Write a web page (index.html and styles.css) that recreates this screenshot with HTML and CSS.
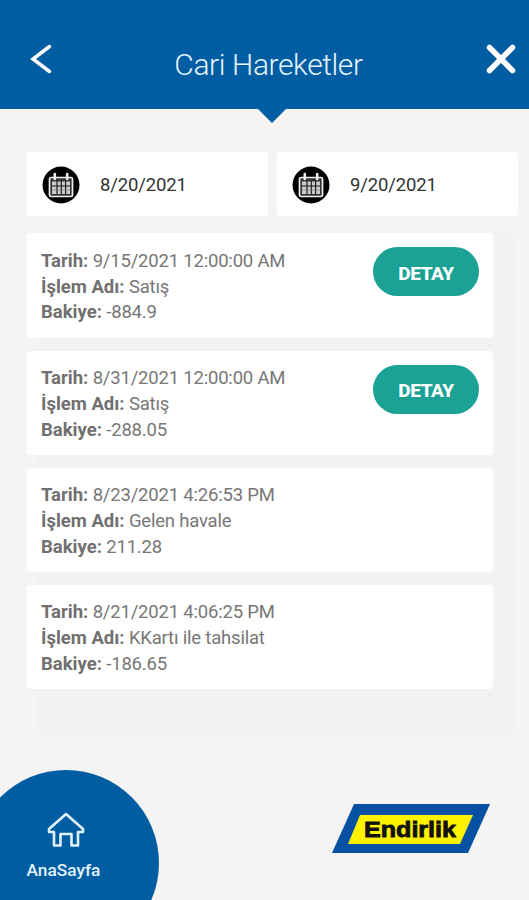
FILE: index.html
```html
<!DOCTYPE html>
<html lang="tr">
<head>
    <meta charset="UTF-8">
    <meta name="viewport" content="width=device-width, initial-scale=1.0">
    <title>Cari Hareketler</title>
    <link rel="stylesheet" href="styles.css">
</head>
<body>
    <!-- Shared calendar icon -->
    <svg width="0" height="0" class="defs">
        <symbol id="calendar" viewBox="0 0 38 38">
            <circle cx="19" cy="19" r="18.5" fill="#000"/>
            <rect x="7.5" y="11.5" width="23" height="19" rx="1.5" fill="#333" stroke="#eee" stroke-width="1.7"/>
            <path d="M12.8 8v5M25.2 8v5" stroke="#eee" stroke-width="2.6" stroke-linecap="round"/>
            <path d="M10 15.5h18v12.5h-18z" fill="#ccc"/>
            <path d="M10 20h18M15 15v13M19.3 15v13M23.6 15v13" stroke="#111" stroke-width="1.1"/>
            <path d="M10 24h18" stroke="#666" stroke-width=".5"/>
        </symbol>
    </svg>

    <header class="header">
        <svg class="back" viewBox="0 0 22 30"><path d="M19.500 2.500 3 15l16.500 12.500"/></svg>
        <h1>Cari Hareketler</h1>
        <svg class="close" viewBox="0 0 30 30"><path d="m3.500 3.500 23 23M26.500 3.500l-23 23"/></svg>
    </header>

    <main>
        <!-- Date range -->
        <div class="dates">
            <div class="date"><svg><use href="#calendar"/></svg><span>8/20/2021</span></div>
            <div class="date"><svg><use href="#calendar"/></svg><span>9/20/2021</span></div>
        </div>

        <!-- Transactions -->
        <div class="list">
            <div class="card">
                <div>
                    <p><b>Tarih:</b> 9/15/2021 12:00:00 AM</p>
                    <p><b>İşlem Adı:</b> Satış</p>
                    <p><b>Bakiye:</b> -884.9</p>
                </div>
                <button>DETAY</button>
            </div>
            <div class="card">
                <div>
                    <p><b>Tarih:</b> 8/31/2021 12:00:00 AM</p>
                    <p><b>İşlem Adı:</b> Satış</p>
                    <p><b>Bakiye:</b> -288.05</p>
                </div>
                <button>DETAY</button>
            </div>
            <div class="card">
                <div>
                    <p><b>Tarih:</b> 8/23/2021 4:26:53 PM</p>
                    <p><b>İşlem Adı:</b> Gelen havale</p>
                    <p><b>Bakiye:</b> 211.28</p>
                </div>
            </div>
            <div class="card">
                <div>
                    <p><b>Tarih:</b> 8/21/2021 4:06:25 PM</p>
                    <p><b>İşlem Adı:</b> KKartı ile tahsilat</p>
                    <p><b>Bakiye:</b> -186.65</p>
                </div>
            </div>
        </div>
    </main>

    <footer>
        <a class="home">
            <svg viewBox="0 0 38 36"><path d="M19 2 2 17v3h5v13.500h6.500V22h11v11.500H31V20h5v-3z"/></svg>
            <span>AnaSayfa</span>
        </a>
        <svg class="logo" viewBox="0 0 158 49">
            <path d="M22 0h136l-22 49H0z" fill="#0651a3"/>
            <path d="M28 11h113l-13 29H16z" fill="#fff200"/>
            <text x="32" y="33" textLength="92" lengthAdjust="spacingAndGlyphs">Endirlik</text>
        </svg>
    </footer>
</body>
</html>
```
FILE: styles.css
```css
* {
    box-sizing: border-box;
}

body {
    margin: 0;
    height: 900px;
    display: flex;
    flex-direction: column;
    background: #f4f4f4;
    font-family: Roboto, sans-serif;
}

svg {
    display: block;
    flex: none;
}

.defs {
    position: absolute;
}

.header {
    position: relative;
    flex: none;
    height: 109px;
    padding: 20px 13px 0 30px;
    display: flex;
    align-items: center;
    justify-content: space-between;
    background: #005da2;
}

/* Small arrow under the header */
.header::after {
    content: "";
    position: absolute;
    top: 108px;
    left: 257px;
    border: 15px solid transparent;
    border-top-color: #005da2;
    border-bottom: 0;
}

.header h1 {
    margin: 0 1px 0 0;
    color: #e4f3ff;
    font-size: 30px;
    font-weight: 300;
    letter-spacing: -.4px;
}

.back,
.close {
    fill: none;
    stroke: #fff;
    stroke-linecap: round;
    margin-bottom: 11px;
}

.back {
    width: 22px;
    height: 30px;
    stroke-width: 3.5;
}

.close {
    width: 30px;
    height: 30px;
    stroke-width: 5.5;
}

main {
    flex: none;
    padding: 43px 11px 0 27px;
}

.dates {
    display: flex;
    gap: 9px;
}

.date {
    width: 241px;
    height: 64px;
    padding: 2px 0 0 15px;
    display: flex;
    align-items: center;
    gap: 20px;
    background: #fff;
    border-radius: 4px;
    color: #333;
    font-size: 18.5px;
    letter-spacing: -.15px;
}

.date svg {
    width: 38px;
    height: 38px;
}

.list {
    margin: 17.4px 0 0;
    padding-bottom: 46px;
    display: flex;
    flex-direction: column;
    gap: 13px;
    background: linear-gradient(#f2f2f2, #f2f2f2) 9px 0 / 480px 100% no-repeat;
}

.card {
    width: 466px;
    height: 104.2px;
    padding: 14px 14px 0;
    display: flex;
    justify-content: space-between;
    align-items: flex-start;
    background: #fff;
    border-radius: 3px;
    color: #777;
    font-size: 18.5px;
    line-height: 25.8px;
    letter-spacing: -.2px;
}

.card div {
    margin-top: 1.5px;
}

.card p {
    margin: 0;
}

.card b {
    color: #707070;
    letter-spacing: 0;
}

.card button {
    width: 106px;
    height: 49px;
    padding: 3px 0 0;
    border: 0;
    border-radius: 25px;
    background: #1ba294;
    color: #fff;
    font: 800 19px Roboto, sans-serif;
    letter-spacing: -.4px;
}

/* The home circle is cut off by the screen edges */
footer {
    flex: 1;
    min-height: 0;
    margin-top: 35px;
    display: flex;
    justify-content: space-between;
    align-items: flex-start;
    overflow: hidden;
}

.home {
    flex: none;
    width: 186px;
    height: 186px;
    margin-left: -27px;
    padding-top: 42px;
    display: flex;
    flex-direction: column;
    align-items: center;
    gap: 12px;
    background: #005da2;
    border-radius: 50%;
    color: #e2f3ff;
    font-size: 17.3px;
    font-weight: 500;
}

.home svg {
    width: 38px;
    height: 36px;
    fill: none;
    stroke: #e2f3ff;
    stroke-width: 2.6;
    stroke-linejoin: round;
}

.home span {
    margin-left: -5px;
}

.logo {
    width: 158px;
    height: 49px;
    margin: 34px 39px 0 0;
}

.logo text {
    fill: #111;
    font: bold 22px "Liberation Sans", Arial, sans-serif;
    stroke: #111;
    stroke-width: .8;
}
```
